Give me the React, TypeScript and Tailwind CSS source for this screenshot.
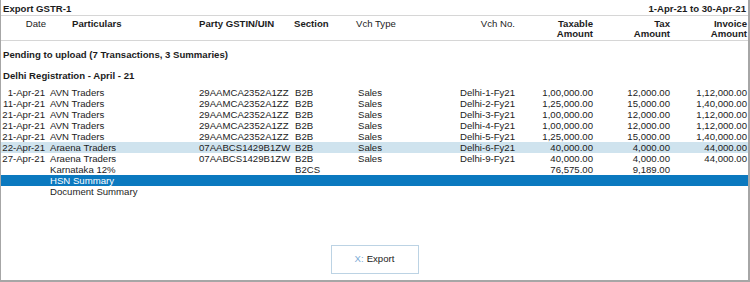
type Row = {
  date?: string
  name: string
  gstin?: string
  section?: string
  type?: string
  no?: string
  taxable?: string
  tax?: string
  invoice?: string
  tone?: "light" | "dark"
}

const rows: Row[] = [
  { date: "1-Apr-21", name: "AVN Traders", gstin: "29AAMCA2352A1ZZ", section: "B2B", type: "Sales", no: "Delhi-1-Fy21", taxable: "1,00,000.00", tax: "12,000.00", invoice: "1,12,000.00" },
  { date: "11-Apr-21", name: "AVN Traders", gstin: "29AAMCA2352A1ZZ", section: "B2B", type: "Sales", no: "Delhi-2-Fy21", taxable: "1,25,000.00", tax: "15,000.00", invoice: "1,40,000.00" },
  { date: "21-Apr-21", name: "AVN Traders", gstin: "29AAMCA2352A1ZZ", section: "B2B", type: "Sales", no: "Delhi-3-Fy21", taxable: "1,00,000.00", tax: "12,000.00", invoice: "1,12,000.00" },
  { date: "21-Apr-21", name: "AVN Traders", gstin: "29AAMCA2352A1ZZ", section: "B2B", type: "Sales", no: "Delhi-4-Fy21", taxable: "1,00,000.00", tax: "12,000.00", invoice: "1,12,000.00" },
  { date: "21-Apr-21", name: "AVN Traders", gstin: "29AAMCA2352A1ZZ", section: "B2B", type: "Sales", no: "Delhi-5-Fy21", taxable: "1,25,000.00", tax: "15,000.00", invoice: "1,40,000.00" },
  { date: "22-Apr-21", name: "Araena Traders", gstin: "07AABCS1429B1ZW", section: "B2B", type: "Sales", no: "Delhi-6-Fy21", taxable: "40,000.00", tax: "4,000.00", invoice: "44,000.00", tone: "light" },
  { date: "27-Apr-21", name: "Araena Traders", gstin: "07AABCS1429B1ZW", section: "B2B", type: "Sales", no: "Delhi-9-Fy21", taxable: "40,000.00", tax: "4,000.00", invoice: "44,000.00" },
  { name: "Karnataka 12%", section: "B2CS", taxable: "76,575.00", tax: "9,189.00" },
  { name: "HSN Summary", tone: "dark" },
  { name: "Document Summary" },
]

const cols = "grid grid-cols-[47px_149px_96px_63px_84px_76px_78px_77px_77px] whitespace-nowrap"

export default function App() {
  return (
    <div
      className="w-[750px] h-[282px] bg-white border-l border-r-2 border-b-2 border-[#a6a6a6] text-[#1c1c1c] text-[9.6px] flex flex-col"
      style={{ fontFamily: '"Liberation Sans", Arial, sans-serif' }}
    >
      <div className="h-[16px] border-b border-[#d6d6d6] flex justify-between px-[2px] pt-[3px] leading-[12px] font-bold">
        <span>Export GSTR-1</span>
        <span>1-Apr-21 to 30-Apr-21</span>
      </div>

      <div className={`${cols} h-[25px] border-b border-[#d6d6d6] pt-[3px] leading-[10px]`}>
        <div className="text-right pr-[2px]">Date</div>
        <div className="pl-[24px] font-bold">Particulars</div>
        <div className="pl-[2px] font-bold">Party GSTIN/UIN</div>
        <div className="pl-[1px] font-bold">Section</div>
        <div>Vch Type</div>
        <div className="text-right pr-[1px]">Vch No.</div>
        <div className="text-right pr-[1px] font-bold">Taxable<br />Amount</div>
        <div className="text-right pr-[1px] font-bold">Tax<br />Amount</div>
        <div className="text-right pr-[1px] font-bold">Invoice<br />Amount</div>
      </div>

      <div className="mt-[8px] px-[2px] leading-[11px] font-bold">Pending to upload (7 Transactions, 3 Summaries)</div>
      <div className="mt-[10px] px-[2px] leading-[11px] font-bold">Delhi Registration - April - 21</div>

      <div className="mt-[6px] flex flex-col">
        {rows.map((r, i) => (
          <div
            key={i}
            className={`${cols} h-[11px] leading-[11px] ${
              r.tone === "light" ? "bg-[#cfe3ee]" : r.tone === "dark" ? "bg-[#0b79bf] text-white" : ""
            }`}
          >
            <div className="text-right pr-[3px]">{r.date}</div>
            <div className="pl-[2px]">{r.name}</div>
            <div className="pl-[2px]">{r.gstin}</div>
            <div className="pl-[2px]">{r.section}</div>
            <div className="pl-[2px]">{r.type}</div>
            <div className="text-right pr-[1px]">{r.no}</div>
            <div className="text-right pr-[1px]">{r.taxable}</div>
            <div className="text-right pr-[1px]">{r.tax}</div>
            <div className="text-right pr-[1px]">{r.invoice}</div>
          </div>
        ))}
      </div>

      <div className="mt-[48px] flex justify-center">
        <div className="w-[88px] h-[29px] border border-[#bcd3e4] flex items-center justify-center">
          <span className="text-[#7cabd6]">X:</span>
          <span className="ml-[3px]">Export</span>
        </div>
      </div>
    </div>
  )
}
